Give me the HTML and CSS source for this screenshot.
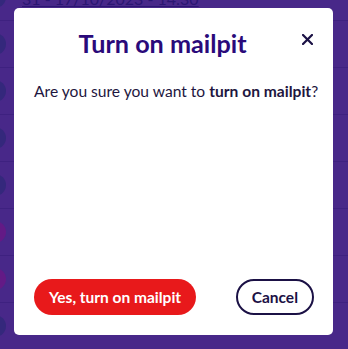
FILE: index.html
```html
<!DOCTYPE html>
<html lang="en">
<head>
    <meta charset="UTF-8">
    <meta name="viewport" content="width=device-width, initial-scale=1.0">
    <title>Turn on mailpit</title>
    <link rel="stylesheet" href="styles.css">
</head>
<body>
    <!-- environment list behind the dialog -->
    <ul class="env-list">
        <li class="env-row"><span class="status ok"></span><a href="#" class="env-link">31 - 17/10/2023 - 14:30</a></li>
        <li class="env-row"><span class="status ok"></span></li>
        <li class="env-row"><span class="status ok"></span></li>
        <li class="env-row"><span class="status ok"></span></li>
        <li class="env-row"><span class="status ok"></span></li>
        <li class="env-row"><span class="status off"></span></li>
        <li class="env-row"><span class="status off"></span></li>
        <li class="env-row"><span class="status ok"></span></li>
    </ul>

    <div class="overlay">
        <div class="modal">
            <div class="modal-header">
                <h2 class="modal-title">Turn on mailpit</h2>
                <button class="close-btn" aria-label="Close">
                    <svg width="11" height="11" viewBox="0 0 11 11">
                        <path d="M1 1 L10 10 M10 1 L1 10" stroke="#1b1145" stroke-width="2.2" stroke-linecap="square"/>
                    </svg>
                </button>
            </div>
            <p class="modal-text">Are you sure you want to <strong>turn on mailpit</strong>?</p>
            <div class="modal-footer">
                <button class="btn btn-danger">Yes, turn on mailpit</button>
                <button class="btn btn-outline">Cancel</button>
            </div>
        </div>
    </div>
</body>
</html>
```

FILE: styles.css
```css
body {
    margin: 0;
    background: #482889;
    font-family: Lato, "Open Sans", sans-serif;
    overflow: hidden;
}
.env-list {
    list-style: none;
    margin: -26px 0 0 0;
    padding: 0;
}
.env-row {
    height: 46px;
    border-bottom: 1px solid #3e2180;
    display: flex;
    align-items: center;
    gap: 16px;
}
.status {
    width: 22px;
    height: 22px;
    border-radius: 50%;
    margin-left: -16px;
    background: #34287c;
}
.status.off {
    background: #631a86;
}
.env-link {
    color: #2b1672;
    font-size: 16px;
    margin-top: 2px;
}
.overlay {
    position: absolute;
    inset: 0;
}
.modal {
    position: absolute;
    left: 14px;
    top: 8px;
    width: 319px;
    height: 327px;
    box-sizing: border-box;
    background: #fff;
    border-radius: 5px;
    padding: 20px 18px 20px 20px;
    display: flex;
    flex-direction: column;
}
.modal-header {
    display: flex;
    align-items: flex-start;
}
.modal-title {
    flex: 1;
    margin: 0;
    text-align: center;
    font-size: 25.2px;
    font-weight: 700;
    color: #2a0a7a;
    line-height: 30px;
}
.close-btn {
    border: 0;
    background: none;
    padding: 0 2px 0 0;
    width: 24px;
    height: 22px;
    display: flex;
    align-items: center;
    justify-content: flex-end;
}
.modal-text {
    margin: 22px 0 0 0;
    font-size: 15.6px;
    color: #1e1640;
    line-height: 22px;
    white-space: nowrap;
}
.modal-text strong {
    font-weight: 700;
}
.modal-footer {
    margin-top: auto;
    display: flex;
    justify-content: space-between;
    align-items: center;
    padding-right: 1px;
}
.btn {
    font-family: Lato, "Open Sans", sans-serif;
    font-size: 15.5px;
    font-weight: 700;
    height: 36px;
    border-radius: 18px;
    padding: 0 15px;
    cursor: pointer;
}
.btn-danger {
    background: #e8191b;
    color: #fff;
    border: 0;
}
.btn-outline {
    background: #fff;
    color: #1b1145;
    border: 2px solid #1b1145;
    padding: 0 14px;
}
```
